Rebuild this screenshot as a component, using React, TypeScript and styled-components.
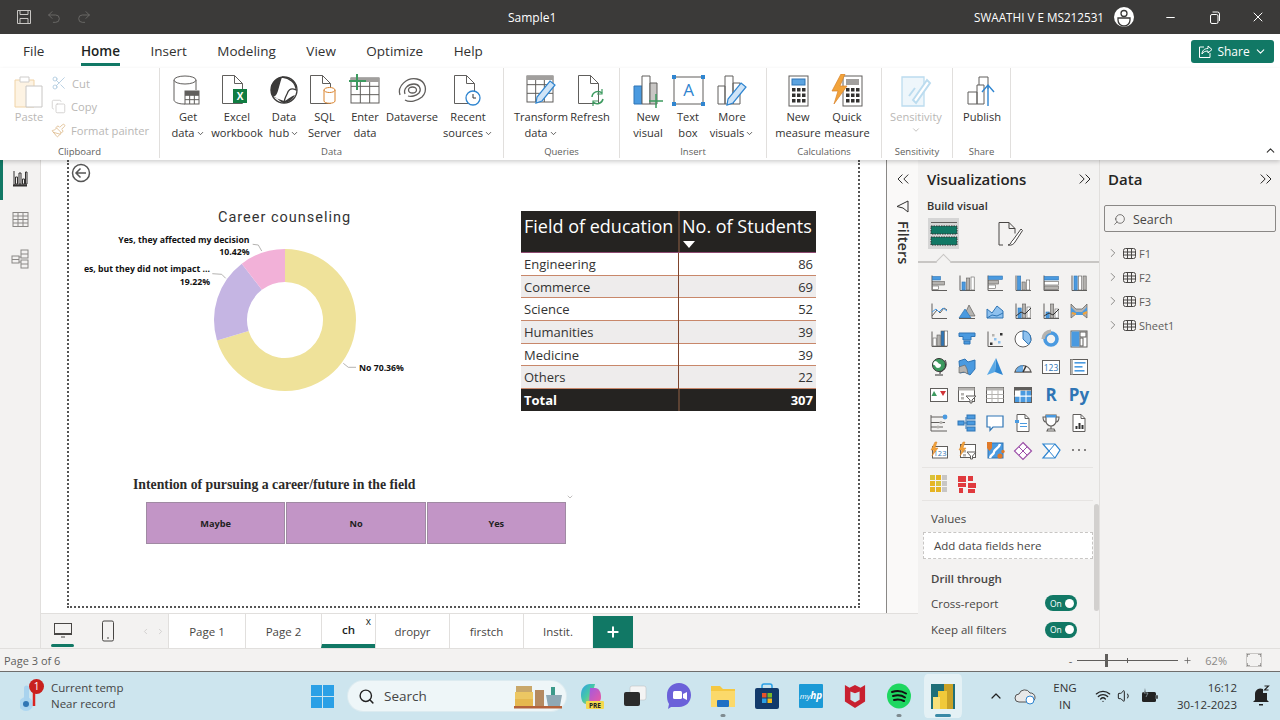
import React from 'react'
import styled, { createGlobalStyle } from 'styled-components'
import {
    ChevronDown, ChevronLeft, ChevronRight, ChevronUp, ChevronsLeft, ChevronsRight, Copy, Minus, Paintbrush, Plus,
    Scissors, Search, Undo2, Redo2, Wifi, Volume1, X,
} from 'lucide-react'

const UI = `"Open Sans", "Noto Sans", sans-serif`
const GREEN = '#117865'
const G = '#605e5c'
const B = '#4a9ae0'
const L = '#b5b3b0'

const GlobalStyle = createGlobalStyle`
    html, body { margin: 0; padding: 0; width: 1280px; height: 720px; overflow: hidden; }
    body { font-family: ${UI}; background: #fff; color: #252423; }
    * { box-sizing: border-box; }
    svg { display: block; flex: none; }
`

const Shell = styled.div`
    width: 1280px;
    height: 720px;
    display: flex;
    flex-direction: column;
    overflow: hidden;
`
const Spacer = styled.div<{ $w?: number; $h?: number }>`
    flex: none;
    width: ${p => p.$w ?? 0}px;
    height: ${p => p.$h ?? 0}px;
`

/* ---------- title bar ---------- */
const TitleBar = styled.div`
    height: 34px;
    flex: none;
    background: #3b3a39;
    color: #fff;
    display: flex;
    align-items: center;
    font-size: 12px;
`
const QuickTools = styled.div`
    width: 508px;
    padding-left: 16px;
    display: flex;
    align-items: center;
    gap: 14px;
`
const TitleRight = styled.div`
    margin-left: auto;
    display: flex;
    align-items: center;
`
const UserName = styled.span`
    font-size: 11.7px;
    margin-right: 9px;
`
const WinButton = styled.div`
    width: 44px;
    display: flex;
    justify-content: center;
`

/* ---------- menu ---------- */
const MenuRow = styled.div`
    height: 34px;
    flex: none;
    background: #fff;
    display: flex;
    align-items: center;
    gap: 30.5px;
    padding: 0 6px 0 23px;
`
const MenuTab = styled.div<{ $active?: boolean; $first?: boolean }>`
    position: relative;
    font-size: 13.5px;
    line-height: 20px;
    margin-right: ${p => (p.$first ? 6 : 0)}px;
    color: ${p => (p.$active ? '#201f1e' : '#323130')};
    font-weight: ${p => (p.$active ? 600 : 400)};
    &::after {
        content: '';
        display: ${p => (p.$active ? 'block' : 'none')};
        position: absolute;
        left: 0;
        right: 0;
        bottom: -5px;
        height: 3px;
        background: ${GREEN};
    }
`
const ShareButton = styled.div`
    margin-left: auto;
    width: 83px;
    height: 23px;
    margin-top: 1px;
    border-radius: 3px;
    background: ${GREEN};
    color: #fff;
    display: flex;
    align-items: center;
    justify-content: center;
    gap: 4px;
    font-size: 12px;
`

/* ---------- ribbon ---------- */
const Ribbon = styled.div`
    position: relative;
    z-index: 2;
    height: 92px;
    flex: none;
    background: #fff;
    display: flex;
    box-shadow: 0 2px 4px rgba(0, 0, 0, 0.18);
`
const Group = styled.div<{ $w: number; $pad?: number }>`
    width: ${p => p.$w}px;
    flex: none;
    display: flex;
    flex-direction: column;
    border-right: 1px solid #e1dfdd;
    margin-bottom: 2px;
    padding-left: ${p => p.$pad ?? 0}px;
`
const GroupBody = styled.div`
    flex: 1;
    display: flex;
    padding-top: 6px;
`
const GroupLabel = styled.div<{ $shift?: number }>`
    font-size: 9.5px;
    line-height: 12px;
    color: ${G};
    text-align: center;
    margin-left: ${p => -(p.$shift ?? 0)}px;
`
const RibbonBtn = styled.div<{ $w: number; $off?: boolean }>`
    width: ${p => p.$w}px;
    flex: none;
    display: flex;
    flex-direction: column;
    align-items: center;
    color: ${p => (p.$off ? '#b9b7b5' : '#323130')};
`
const IconSlot = styled.div`
    height: 35px;
    display: flex;
    align-items: flex-start;
    justify-content: center;
`
const BtnLine = styled.div`
    font-size: 11.1px;
    line-height: 16px;
    white-space: nowrap;
    display: flex;
    align-items: center;
    gap: 1px;
`
const SmallStack = styled.div`
    display: flex;
    flex-direction: column;
    gap: 5.5px;
    margin-left: 5px;
`
const SmallBtn = styled.div`
    height: 18px;
    display: flex;
    align-items: center;
    gap: 5px;
    font-size: 11.2px;
    color: #b9b7b5;
    white-space: nowrap;
`
const RibbonCollapse = styled.div`
    position: absolute;
    right: 3px;
    bottom: 3px;
    color: #323130;
`

/* ---------- main ---------- */
const Main = styled.div`
    flex: 1;
    min-height: 0;
    display: flex;
    background: #f3f2f1;
`
const LeftNav = styled.div`
    width: 41px;
    flex: none;
    display: flex;
    flex-direction: column;
    border-right: 1px solid #e1dfdd;
`
const NavItem = styled.div<{ $active?: boolean }>`
    height: 40px;
    display: flex;
    align-items: center;
    justify-content: center;
    padding: 0 3px 2px 0;
    border-left: 3px solid ${p => (p.$active ? GREEN : 'transparent')};
`
const Center = styled.div`
    width: 877px;
    flex: none;
    display: flex;
    flex-direction: column;
`
const CanvasRow = styled.div`
    flex: 1;
    min-height: 0;
    display: flex;
    background: #fff;
`
const Canvas = styled.div`
    width: 846px;
    flex: none;
    padding: 0 26px 5px 26px;
    border-right: 1px solid #8a8886;
`
const ReportPage = styled.div`
    position: relative;
    height: 100%;
    border: 2px dotted #555;
    border-top: none;
    display: flex;
    flex-direction: column;
`
const BackCircle = styled.div`
    margin: 3px 0 0 2px;
    height: 20px;
`
const TopVisuals = styled.div`
    display: flex;
    align-items: flex-start;
    margin-top: 28px;
`
const DonutVisual = styled.div`
    width: 336px;
    margin-left: 15px;
    flex: none;
`
const DonutTitle = styled.div`
    font-family: Roboto, sans-serif;
    font-size: 14.5px;
    line-height: 14px;
    letter-spacing: 1px;
    color: #333;
    padding-left: 134px;
    white-space: nowrap;
`
const ChartLabel = styled.text`
    font-family: ${UI};
    font-size: 8.7px;
    font-weight: 700;
    fill: #111;
`
const StudentsTable = styled.div`
    width: 295px;
    margin-left: 101px;
    flex: none;
    display: flex;
    flex-direction: column;
`
const HeadRow = styled.div`
    height: 42px;
    background: #252321;
    color: #fff;
    display: grid;
    grid-template-columns: 157px 1fr;
    border-bottom: 1px solid #8d4a70;
`
const HeadCell = styled.div`
    position: relative;
    font-size: 18px;
    line-height: 30px;
    padding-left: 3px;
    white-space: nowrap;
    & + & { border-left: 2px solid #5c4233; padding-left: 2px; }
`
const SortArrow = styled.div`
    position: absolute;
    left: 3px;
    bottom: 4px;
    border-left: 6px solid transparent;
    border-right: 6px solid transparent;
    border-top: 7px solid #fff;
`
const BodyRow = styled.div<{ $alt?: boolean }>`
    height: 22.7px;
    display: grid;
    grid-template-columns: 157px 1fr;
    background: ${p => (p.$alt ? '#eeecec' : '#fff')};
    border-bottom: 1.5px solid #c8876a;
    color: #333;
    font-size: 13px;
    line-height: 23px;
`
const BodyCell = styled.div<{ $right?: boolean }>`
    padding: 0 3px;
    text-align: ${p => (p.$right ? 'right' : 'left')};
    & + & { border-left: 1.5px solid #80442c; }
`
const TotalRow = styled.div`
    height: 22px;
    display: grid;
    grid-template-columns: 157px 1fr;
    background: #252321;
    color: #fff;
    font-size: 13px;
    font-weight: 700;
    line-height: 22px;
`
const TotalCell = styled.div<{ $right?: boolean }>`
    padding: 0 3px;
    text-align: ${p => (p.$right ? 'right' : 'left')};
    & + & { border-left: 2px solid #5c4233; }
`
const SlicerVisual = styled.div`
    position: relative;
    margin: 66px 0 0 64px;
    width: 441px;
`
const SlicerTitle = styled.div`
    font-family: "Liberation Serif", serif;
    font-weight: 700;
    font-size: 13.75px;
    line-height: 15px;
    color: #2b2a29;
    white-space: nowrap;
`
const SlicerCaret = styled.div`
    position: absolute;
    right: 0;
    top: 16px;
    color: #a19f9d;
`
const SlicerRow = styled.div`
    margin: 10px 0 0 13px;
    width: 420px;
    height: 42px;
    display: grid;
    grid-template-columns: repeat(3, 1fr);
    gap: 1px;
    background: #fff;
`
const SlicerItem = styled.div`
    background: #c295c6;
    border: 1px solid #a08aa3;
    display: flex;
    align-items: center;
    justify-content: center;
    font-size: 9.2px;
    font-weight: 700;
    color: #222;
`
const FiltersPane = styled.div`
    width: 31px;
    flex: none;
    display: flex;
    flex-direction: column;
    align-items: center;
    padding-top: 9px;
    color: #323130;
    background: #faf9f8;
`
const FiltersLabel = styled.div`
    writing-mode: vertical-rl;
    font-size: 14.5px;
    font-weight: 600;
    line-height: 16px;
    margin-top: 8px;
`
const TabsBar = styled.div`
    height: 35px;
    flex: none;
    display: flex;
    background: #f3f2f1;
    border-top: 1px solid #e1dfdd;
`
const ViewSwitch = styled.div`
    width: 127px;
    flex: none;
    display: flex;
    align-items: center;
    padding-left: 10px;
`
const ViewBtn = styled.div<{ $active?: boolean; $w: number }>`
    position: relative;
    width: ${p => p.$w}px;
    flex: none;
    display: flex;
    justify-content: center;
    &::after {
        content: '';
        display: ${p => (p.$active ? 'block' : 'none')};
        position: absolute;
        left: 0;
        right: 0;
        bottom: -7px;
        height: 3px;
        border-radius: 2px;
        background: ${GREEN};
    }
`
const PageArrows = styled.div`
    display: flex;
    gap: 6px;
    color: #c8c6c4;
`
const PageTab = styled.div<{ $w: number; $active?: boolean }>`
    position: relative;
    width: ${p => p.$w}px;
    flex: none;
    background: #fff;
    border-left: 1px solid #e1dfdd;
    display: flex;
    align-items: center;
    justify-content: center;
    font-size: 11.5px;
    font-weight: ${p => (p.$active ? 600 : 400)};
    color: ${p => (p.$active ? '#201f1e' : '#484644')};
    border-bottom: ${p => (p.$active ? `4px solid ${GREEN}` : '0')};
`
const TabClose = styled.span`
    position: absolute;
    top: 1px;
    right: 4px;
    font-size: 10px;
    line-height: 12px;
    font-weight: 400;
`
const AddPage = styled.div`
    width: 40px;
    height: 32px;
    margin: 2px 0 0 1px;
    background: ${GREEN};
    color: #fff;
    display: flex;
    align-items: center;
    justify-content: center;
`

/* ---------- right panes ---------- */
const VizPane = styled.div`
    position: relative;
    width: 181px;
    flex: none;
    display: flex;
    flex-direction: column;
    background: #f3f2f1;
    padding-top: 9px;
`
const PaneHead = styled.div<{ $left: number }>`
    display: flex;
    align-items: center;
    justify-content: space-between;
    padding: 0 4px 0 ${p => p.$left}px;
    font-size: 15px;
    font-weight: 600;
    line-height: 20px;
    color: #252423;
`
const BuildLabel = styled.div`
    font-size: 11px;
    font-weight: 600;
    line-height: 14px;
    margin: 10px 0 0 9px;
    color: #323130;
`
const BuildTabs = styled.div`
    display: flex;
    margin: 5px 0 0 10px;
    gap: 35px;
    height: 39px;
`
const BuildTab = styled.div<{ $active?: boolean }>`
    width: 31px;
    height: 31px;
    background: ${p => (p.$active ? '#d5d5d5' : 'transparent')};
    display: flex;
    align-items: center;
    justify-content: center;
`
const BuildRule = styled.div`
    position: relative;
    height: 2px;
    margin: 4px 0 0 0;
    background: #c8c6c4;
    &::after {
        content: '';
        position: absolute;
        left: 20px;
        top: -5px;
        width: 10px;
        height: 10px;
        transform: rotate(45deg);
        background: #f3f2f1;
        border-left: 1px solid #c8c6c4;
        border-top: 1px solid #c8c6c4;
    }
`
const VizGrid = styled.div<{ $top: number }>`
    display: grid;
    grid-template-columns: repeat(6, 28px);
    grid-auto-rows: 28px;
    padding: ${p => p.$top}px 0 0 7px;
`
const VizCell = styled.div`
    display: flex;
    align-items: center;
    justify-content: center;
`
const VizText = styled.span`
    font-size: 17px;
    font-weight: 700;
    line-height: 20px;
    color: #2f75b5;
`
const ThinRule = styled.div`
    height: 1px;
    background: #e6e4e2;
    margin: 2px 6px 0 4px;
`
const Scrollbar = styled.div`
    position: absolute;
    right: 0;
    top: 344px;
    width: 5px;
    height: 107px;
    border-radius: 3px;
    background: #d2d0ce;
`
const FieldLabel = styled.div`
    font-size: 11.5px;
    line-height: 16px;
    margin: 10px 0 0 13px;
    color: #484644;
`
const DropBox = styled.div`
    margin: 5px 6px 0 5px;
    height: 27px;
    background: #fff;
    border: 1px dashed #c8c6c4;
    display: flex;
    align-items: center;
    padding-left: 10px;
    font-size: 11.5px;
    color: #484644;
`
const DrillTitle = styled.div`
    font-size: 11.5px;
    font-weight: 600;
    line-height: 16px;
    margin: 12px 0 3px 13px;
    color: #484644;
`
const ToggleRow = styled.div`
    height: 26.5px;
    display: flex;
    align-items: center;
    justify-content: space-between;
    padding: 0 22px 0 13px;
    font-size: 11.5px;
    color: #484644;
`
const Toggle = styled.div`
    width: 32px;
    height: 16px;
    border-radius: 8px;
    background: ${GREEN};
    color: #fff;
    font-size: 8.5px;
    display: flex;
    align-items: center;
    justify-content: space-between;
    padding: 0 3px 0 5px;
    &::after {
        content: '';
        width: 9px;
        height: 9px;
        border-radius: 50%;
        background: #fff;
    }
`
const DataPane = styled.div`
    flex: 1;
    display: flex;
    flex-direction: column;
    background: #f3f2f1;
    border-left: 1px solid #e1dfdd;
    padding-top: 9px;
`
const SearchBox = styled.div`
    margin: 16px 4px 0 4px;
    height: 27px;
    border: 1px solid #8a8886;
    border-radius: 2px;
    display: flex;
    align-items: center;
    gap: 7px;
    padding: 1px 0 0 8px;
    font-size: 12.5px;
    color: #484644;
`
const MirroredSearch = styled(Search)`
    transform: scaleX(-1);
`
const TreeList = styled.div`
    margin-top: 9px;
    padding-left: 6px;
`
const TreeRow = styled.div`
    height: 24px;
    display: flex;
    align-items: center;
    gap: 3px;
    font-size: 11px;
    color: #605e5c;
`

/* ---------- status bar ---------- */
const StatusBar = styled.div`
    height: 24px;
    flex: none;
    background: #f3f2f1;
    border-top: 1px solid #e1dfdd;
    border-bottom: 1px solid #6f6e6c;
    display: flex;
    align-items: center;
    padding: 0 18px 0 4px;
    font-size: 11px;
    color: #605e5c;
`
const ZoomTools = styled.div`
    margin-left: auto;
    display: flex;
    align-items: center;
    gap: 5px;
`
const ZoomTrack = styled.div`
    position: relative;
    width: 101px;
    height: 1px;
    background: #605e5c;
    &::before {
        content: '';
        position: absolute;
        left: 28px;
        top: -6px;
        width: 3px;
        height: 13px;
        background: #605e5c;
    }
    &::after {
        content: '';
        position: absolute;
        left: 50px;
        top: -2px;
        width: 1px;
        height: 5px;
        background: #605e5c;
    }
`
const ZoomValue = styled.span`
    margin: 0 14px 0 8px;
    color: #8a8886;
`

/* ---------- taskbar ---------- */
const Taskbar = styled.div`
    height: 48px;
    flex: none;
    background: #cde5ee;
    display: flex;
    align-items: center;
`
const Weather = styled.div`
    width: 311px;
    flex: none;
    padding-left: 20px;
    display: flex;
    align-items: center;
    gap: 1px;
    font-size: 11.5px;
    line-height: 16px;
    color: #444;
`
const Badge = styled.div`
    position: absolute;
    left: 9px;
    top: -1px;
    width: 15px;
    height: 15px;
    border-radius: 50%;
    background: #c8201e;
    color: #fff;
    font-size: 10px;
    line-height: 15px;
    text-align: center;
`
const ThermoWrap = styled.div`
    position: relative;
    width: 30px;
    height: 32px;
`
const TaskSearch = styled.div`
    width: 218px;
    height: 30px;
    margin-left: 14px;
    border-radius: 15px;
    background: #eef6f8;
    display: flex;
    align-items: center;
    padding: 0 2px 0 10px;
    gap: 9px;
    font-size: 13.5px;
    color: #444;
    box-shadow: 0 0 0 1px #dcebf0;
`
const TaskSearchText = styled.span`
    flex: 1;
`
const TaskIcons = styled.div`
    display: flex;
    align-items: center;
    margin-left: 3px;
`
const TaskIcon = styled.div<{ $active?: boolean; $dot?: boolean }>`
    position: relative;
    width: 44px;
    height: 44px;
    display: flex;
    align-items: center;
    justify-content: center;
    border-radius: 6px;
    border: 0 solid transparent;
    border-width: 0 3px;
    background: ${p => (p.$active ? '#e4f1f5' : 'transparent')};
    background-clip: padding-box;
    &::after {
        content: '';
        display: ${p => (p.$active || p.$dot ? 'block' : 'none')};
        position: absolute;
        bottom: 1px;
        left: 50%;
        transform: translateX(-50%);
        width: ${p => (p.$active ? 16 : 5)}px;
        height: 3px;
        border-radius: 2px;
        background: ${p => (p.$active ? '#3a8aa6' : '#7f8b90')};
    }
`
const Tray = styled.div`
    margin-left: 23px;
    display: flex;
    align-items: center;
    color: #222;
`
const LangBlock = styled.div`
    width: 34px;
    margin: 0 13px 0 12px;
    font-size: 11.5px;
    line-height: 17px;
    text-align: center;
    color: #333;
`
const ClockBlock = styled.div`
    margin-left: 18px;
    font-size: 11.5px;
    line-height: 17px;
    text-align: right;
    color: #333;
`

/* ---------- drawn icons ---------- */
const Rect = (x: number, y: number, w: number, h: number, fill = 'none', stroke?: string) => (
    <rect x={x} y={y} width={w} height={h} fill={fill} stroke={stroke} />
)
const Axes = () => <path d="M3 2.5v15h15" fill="none" stroke={G} />

const Bars = (rows: [number, number, string][]) => (
    <>
        <Axes />
        {rows.map(([y, w, c], i) => <rect key={i} x={3.5} y={y} width={w} height={3.5} fill={c} stroke={c === B ? '#2f75b5' : G} strokeWidth={0.6} />)}
    </>
)
const Cols = (cols: [number, number, string][]) => (
    <>
        <Axes />
        {cols.map(([x, h, c], i) => <rect key={i} x={x} y={17 - h} width={3.2} height={h} fill={c} stroke={c === B ? '#2f75b5' : G} strokeWidth={0.6} />)}
    </>
)
const PBolt = () => <path d="M6 1 2 9h3l-2 6 6-8H6l2-6z" fill="#f2a33a" stroke="#d9822b" strokeWidth={0.5} />

const VIZ_ICONS: React.ReactNode[] = [
    Bars([[3.5, 8, B], [8.5, 12, L], [13, 6, '#fff']]),
    Cols([[5, 8, B], [9.5, 12, L], [14, 13, '#fff']]),
    Bars([[3, 14, B], [7.5, 10, L], [12, 7, '#fff']]),
    Cols([[4.5, 14, B], [9, 8, L], [13.5, 10, '#fff']]),
    Bars([[3.5, 14, B], [8.5, 14, '#fff'], [13, 14, L]]),
    Cols([[5, 14, B], [9.5, 14, '#fff'], [14, 14, L]]),
    <><Axes /><path d="M3 15l5-6 3 3 4-5 3 2" fill="none" stroke={G} /><path d="M3 11l4-3 3 3 4-4 4 3" fill="none" stroke={B} /></>,
    <><path d="M7 15 12 4l6 11z" fill={L} stroke={G} strokeWidth={0.7} /><path d="M2 17l6-9 6 9z" fill={B} stroke="#2f75b5" strokeWidth={0.7} /><path d="M2 17.5h16" stroke={G} /></>,
    <><path d="M2 17V8l5 4 5-7 6 5v7z" fill="#8ec1ee" stroke="#2f75b5" /><path d="M2 17l5-3 5 1 6-3" fill="none" stroke="#2f75b5" /></>,
    <>{Cols([[5, 10, B], [9.5, 14, L], [14, 11, '#fff']])}<path d="M3 15l5-4 4 2 6-6" fill="none" stroke="#333" /></>,
    <>{Cols([[5, 6, B], [9.5, 14, L], [14, 9, '#fff']])}<path d="M3 15l5-3 4 2 6-6" fill="none" stroke="#333" /></>,
    <><path d="M2 3l5 5 6 0 5-5v14l-5-4H7l-5 4z" fill={L} stroke={G} strokeWidth={0.7} /><path d="M2 6l5 5h6l5-5v5l-5 3H7l-5-3z" fill={B} /><path d="M3 12l4 1m7 0 4-2" stroke="#f2a33a" strokeWidth={2} /></>,
    <>{Cols([[4, 8, '#fff'], [8, 11, L], [12, 15, '#2f75b5'], [15.5, 15, '#fff']])}</>,
    <><path d="M2 4h16v3.5H14V11H6V7.5H2z" fill={B} stroke="#2f75b5" /><path d="M7 12h6v3H7z" fill={B} stroke="#2f75b5" /></>,
    <><Axes />{Rect(5, 13.5, 2.5, 2.5, '#333')}{Rect(7, 5, 2.5, 2.5, L)}{Rect(9, 9, 2.5, 2.5, '#8ec1ee')}{Rect(13, 12, 2.5, 2.5, '#8ec1ee')}{Rect(15, 4, 2.5, 2.5, '#333')}</>,
    <><circle cx="10" cy="10" r="8" fill="#fff" stroke={G} /><path d="M10 2a8 8 0 0 1 5.7 13.6L10 10z" fill="#8ec1ee" stroke="#2f75b5" /></>,
    <><circle cx="10" cy="10" r="6" fill="none" stroke={B} strokeWidth={3.6} /><path d="M10 2.2A7.8 7.8 0 0 0 2.2 10" fill="none" stroke={L} strokeWidth={3.6} /></>,
    <>{Rect(2, 2, 16, 16, '#fff', G)}{Rect(2.5, 2.5, 8, 15, B)}{Rect(11, 3, 6, 5, '#fff', G)}{Rect(11, 9, 3, 8, '#fff', G)}</>,
    <><circle cx="10" cy="8" r="6.5" fill="#3c9a5f" stroke="#333" /><path d="M6 4c3 0 3 3 5 3s1 4-2 4-2-3-4-3 0-4 1-4z" fill="#fff" /><path d="M16 3a8 8 0 0 1-5 12v2M6 18h8" fill="none" stroke="#333" /></>,
    <><path d="M2 4l6-2 3 3 7-2v9l-5 6-5-3-5 1z" fill={B} stroke="#2f75b5" /><path d="M2 10l6-2 2 4 1 5-4-2-5 1z" fill={L} stroke={G} strokeWidth={0.6} /></>,
    <><path d="M11 1 18 18l-8-3z" fill="#2e86d1" /><path d="M11 1 2 18l8-3z" fill="#5aa9e6" /></>,
    <><path d="M2 15a8.2 8.2 0 0 1 16 0z" fill="none" stroke={G} strokeWidth={1.3} /><path d="M3 15a7 7 0 0 1 7-7v7z" fill={B} opacity={0.8} /><path d="M10 15l3-6" stroke="#333" strokeWidth={1.6} /></>,
    <>{Rect(1.5, 3.5, 17, 13, '#fff', G)}<text x="10" y="13.5" textAnchor="middle" fontSize="8.5" fill="#2f75b5" fontFamily="Open Sans">123</text></>,
    <>{Rect(1.5, 2.5, 17, 15, '#fff', G)}{Rect(1.5, 2.5, 2.5, 15, L)}{Rect(5.5, 5, 11, 1.6, B)}{Rect(5.5, 9, 8, 1.6, B)}{Rect(5.5, 13, 10, 1.6, B)}</>,
    <>{Rect(1.5, 3.5, 17, 13, '#fff', G)}<path d="M5 6l3 5H2.5z" fill="#3c9a5f" /><path d="M11 6h6l-3 5z" fill="#d13438" /></>,
    <>{Rect(1.5, 2.5, 16, 14, '#fff', G)}{Rect(1.5, 2.5, 16, 3, L)}{Rect(4, 8, 3, 2.5, L)}{Rect(4, 12, 3, 2.5, L)}<path d="M9 11h10l-4 4v3h-2v-3z" fill="#fff" stroke={G} /></>,
    <>{Rect(1.5, 2.5, 17, 15, '#fff', G)}{Rect(1.5, 2.5, 17, 3, L)}<path d="M7 5.5v12m6-12v12M1.5 9.5h17M1.5 13.5h17" stroke={L} /></>,
    <>{Rect(1.5, 2.5, 17, 15, '#fff', G)}{Rect(1.5, 2.5, 17, 3, G)}{Rect(7, 6, 11, 5, B)}{Rect(2, 11.5, 16, 5.5, B)}<path d="M7 5.5v12m6-12v12M1.5 11h17" stroke="#fff" /></>,
    'R',
    'Py',
    <><path d="M2 2v16M2 4h14M2 9.5h14M2 14h12M2 18h16" fill="none" stroke={G} /><circle cx="16" cy="4" r="2.4" fill={B} /><circle cx="12" cy="9.5" r="1.6" fill={L} /><circle cx="9" cy="14" r="1.6" fill={L} /></>,
    <>{Rect(1, 8, 6, 4, B, '#2f75b5')}{Rect(10, 2, 8, 4, B, '#2f75b5')}{Rect(10, 8, 8, 4, B, '#2f75b5')}{Rect(10, 14, 8, 4, B, '#2f75b5')}<path d="M7 10h3M9 4v12" stroke="#2f75b5" fill="none" /></>,
    <path d="M2 3h16v11H8l-3 3.5V14H2z" fill="#fff" stroke="#2f75b5" strokeWidth={1.2} />,
    <><path d="M4 1.5h8l4 4v13H4z" fill="#fff" stroke={G} /><path d="M12 1.5v4h4" fill="none" stroke={G} />{Rect(2, 7, 4, 3, B)}<path d="M7 10.5h7M7 13.5h7" stroke={B} /></>,
    <><path d="M5 2h10v6a5 5 0 0 1-10 0z" fill="#fff" stroke={G} strokeWidth={1.2} />{Rect(5, 2, 10, 2.5, B)}<path d="M5 4H2c0 3 1 5 3 5m10-5h3c0 3-1 5-3 5M10 13v3M6 18h8l-1-2H7z" fill="none" stroke={G} strokeWidth={1.1} /></>,
    <><path d="M4 1.5h8l4 4v13H4z" fill="#fff" stroke={G} /><path d="M12 1.5v4h4" fill="none" stroke={G} /><path d="M6.5 16v-3h2v3zm3 0v-6h2v6zm3 0v-4h2v4z" fill="#333" /></>,
    <>{Rect(3.5, 5.5, 15, 11.5, '#fff', G)}<text x="11" y="14.5" textAnchor="middle" fontSize="7.5" fill="#2f75b5" fontFamily="Open Sans">123</text><PBolt /></>,
    <>{Rect(3.5, 3.5, 15, 13, '#fff', G)}{Rect(6, 9, 3, 2.5, L)}{Rect(6, 13, 3, 2.5, L)}<path d="M10 11h9l-3.5 4v3h-2v-3z" fill="#fff" stroke={G} /><PBolt /></>,
    <>{Rect(3, 2, 15, 15, '#4a9ae0', '#2f75b5')}<path d="M5 17c1-4 4-3 4-6s5-3 6-8" stroke="#fff" strokeWidth={2.4} fill="none" /><path d="M2 1h5v6L4.5 10 2 7z" fill="#e07a2a" /><circle cx="15" cy="15" r="2.6" fill="#e07a2a" /><circle cx="18" cy="10.5" r="1.7" fill="#e07a2a" /></>,
    <><path d="M10 1.5 18.5 10 10 18.5 1.5 10z" fill="#fff" stroke="#9c4fa8" strokeWidth={1.2} /><path d="M6 6l8 8M14 6l-8 8" stroke="#9c4fa8" strokeWidth={1} /></>,
    <><path d="M2 3h12l5 6-5 8H2l6-7z" fill="#fff" stroke="#2f85d0" strokeWidth={1.2} /><path d="M8 10l6-7M8 10l6 7" stroke="#2f85d0" /></>,
    <><circle cx="4" cy="9" r="1" fill={G} /><circle cx="10" cy="9" r="1" fill={G} /><circle cx="16" cy="9" r="1" fill={G} /></>,
]

const GridTiles = () => (
    <svg width="20" height="20" viewBox="0 0 20 20">
        {[[1, 1, '#d9c23a'], [7, 1, '#e6b422'], [13, 1, '#c8c6c4'], [1, 7, '#e6b422'], [7, 7, '#d9c23a'], [13, 7, '#c8c6c4'], [1, 13, '#e6b422'], [7, 13, '#e6b422'], [13, 13, '#c8c6c4']].map(([x, y, c], i) => (
            <rect key={i} x={x as number} y={y as number} width="5" height="5" fill={c as string} />
        ))}
    </svg>
)
const RedBlocks = () => (
    <svg width="20" height="20" viewBox="0 0 20 20">
        <path d="M1 2h8v6H1zM11 2h5v5h-5zM1 9h8v4H1zM11 9h8v5h-8zM2 14h4v5H2zM11 15h7v4h-7z" fill="#e03a3e" />
    </svg>
)

const Doc = ({ children, x = 3, w = 20 }: { children?: React.ReactNode; x?: number; w?: number }) => (
    <svg width="34" height="34" viewBox="0 0 34 34">
        <path d={`M${x + 0.5} 1.5h${w - 8}l8 8v${20}h-${w}z`} fill="#fff" stroke={G} />
        <path d={`M${x + w - 7.5} 1.5v8h8`} fill="none" stroke={G} />
        {children}
    </svg>
)
const TableGrid = ({ x, y, w, h }: { x: number; y: number; w: number; h: number }) => (
    <g stroke={G} fill="#fff">
        <rect x={x} y={y} width={w} height={h} />
        <path d={`M${x + w / 3} ${y}v${h}M${x + 2 * w / 3} ${y}v${h}M${x} ${y + h / 3}h${w}M${x} ${y + 2 * h / 3}h${w}`} fill="none" />
    </g>
)
const Pencil = ({ dx = 0, dy = 0 }: { dx?: number; dy?: number }) => (
    <path transform={`translate(${dx} ${dy})`} d="M25 7l5 4-13 16-6 2 1-6z" fill="#cfe4f7" stroke="#2f85d0" strokeWidth={1.2} />
)
const IconPaste = () => (
    <svg width="34" height="36" viewBox="0 0 34 36">
        <path d="M3 6h19v27H3z" fill="#fdf3e3" stroke="#f0d3a6" />
        <path d="M8 3h9v5H8z" fill="#fff" stroke="#cfcdcb" />
        <path d="M14 12h16v21H14z" fill="#fff" stroke="#c8c6c4" />
    </svg>
)
const IconGetData = () => (
    <svg width="34" height="34" viewBox="0 0 34 34">
        <path d="M3 6v20c0 2 4 4 10 4h1M25 6v10" fill="none" stroke={G} />
        <ellipse cx="14" cy="6" rx="11" ry="4" fill="#fff" stroke={G} />
        <TableGrid x={14} y={17} w={14} h={13} />
        <rect x="14" y="17" width="14" height="4" fill={G} />
    </svg>
)
const IconExcel = () => (
    <Doc x={2} w={20}>
        <rect x="13" y="15" width="14" height="14" fill="#107c41" />
        <text x="20" y="26" textAnchor="middle" fontSize="10" fontWeight="700" fill="#fff" fontFamily="Open Sans">X</text>
    </Doc>
)
const IconHub = () => (
    <svg width="34" height="34" viewBox="0 0 34 34">
        <circle cx="17" cy="16" r="13" fill="#fff" stroke="#3b3a39" strokeWidth={1.3} />
        <path d="M15 3A13 13 0 0 0 6 23c5-1 5-8 9-20z" fill="#3b3a39" />
        <path d="M15 3c7 1 14 5 14 13-6-3-8 1-9 4-2 4-3 8-3 9" fill="none" stroke="#3b3a39" strokeWidth={1.3} />
        <path d="M6 23c5 0 6 5 11 6 5 0 9-4 11-8-7 3-9 6-11 6" fill="#3b3a39" />
    </svg>
)
const IconSql = () => (
    <Doc x={2} w={20}>
        <path d="M16 16v11c0 3 11 3 11 0V16" fill="#fff" stroke="#d9822b" />
        <ellipse cx="21.5" cy="16" rx="5.5" ry="2.5" fill="#fff" stroke="#d9822b" />
    </Doc>
)
const IconEnter = () => (
    <svg width="34" height="34" viewBox="0 0 34 34">
        <TableGrid x={3} y={4} w={28} h={25} />
        <rect x="3" y="4" width="28" height="4" fill="#a19f9d" />
        <path d="M9 0v16M1 7h17" stroke="#3c9a5f" strokeWidth={2} />
    </svg>
)
const IconDataverse = () => (
    <svg width="34" height="34" viewBox="0 0 34 34" fill="none" stroke={G} strokeWidth={1.3}>
        <path d="M5 21C2 12 12 3 22 5c9 2 11 12 5 18-5 4-12 6-17 3" />
        <path d="M10 20c-2-5 3-10 9-10 5 0 8 5 5 9-3 3-8 4-11 3" />
        <ellipse cx="17.5" cy="16" rx="4" ry="3" />
    </svg>
)
const IconRecent = () => (
    <Doc x={3} w={20}>
        <circle cx="22" cy="24" r="7" fill="#fff" stroke="#2f85d0" strokeWidth={1.3} />
        <path d="M22 20v4h3" fill="none" stroke="#323130" />
    </Doc>
)
const IconTransform = () => (
    <svg width="34" height="34" viewBox="0 0 34 34">
        <TableGrid x={3} y={2} w={26} h={26} />
        <rect x="3" y="2" width="26" height="4" fill="#a19f9d" />
        <Pencil dx={1} dy={0} />
    </svg>
)
const IconRefresh = () => (
    <Doc x={5} w={20}>
        <path d="M19 23a6 6 0 0 1 10-4m1 6a6 6 0 0 1-10 3" fill="none" stroke="#3c9a5f" strokeWidth={1.5} />
        <path d="M29 15v5h-5M20 32v-5h5" fill="none" stroke="#3c9a5f" strokeWidth={1.2} />
    </Doc>
)
const IconNewVisual = () => (
    <svg width="34" height="34" viewBox="0 0 34 34">
        <path d="M3 12h8v18H3z" fill="#4a9ae0" stroke="#2f75b5" />
        <path d="M11 2h8v28h-8z" fill="#fff" stroke={G} />
        <path d="M19 9h7v21h-7z" fill="#c8c6c4" stroke={G} />
        <path d="M25 20v14M18 27h14" stroke="#3c9a5f" strokeWidth={1.5} />
    </svg>
)
const IconTextBox = () => (
    <svg width="34" height="34" viewBox="0 0 34 34">
        <rect x="3" y="3" width="29" height="27" fill="#fff" stroke={G} />
        <text x="17.5" y="22" textAnchor="middle" fontSize="17" fill="#2f85d0" fontFamily="Open Sans">A</text>
        {[[3, 3], [32, 3], [3, 30], [32, 30]].map(([x, y], i) => <rect key={i} x={x - 2} y={y - 2} width="4" height="4" fill="#2f85d0" />)}
    </svg>
)
const IconMore = () => (
    <svg width="34" height="34" viewBox="0 0 34 34">
        <path d="M3 12h7v18H3zM10 2h8v28h-8zM18 9h7v21h-7z" fill="#fff" stroke={G} />
        <Pencil dx={1} dy={2} />
    </svg>
)
const IconCalc = ({ bolt }: { bolt?: boolean }) => (
    <svg width="34" height="34" viewBox="0 0 34 34">
        <rect x={bolt ? 13 : 8} y="2" width="19" height="30" fill="#fff" stroke={G} />
        <rect x={bolt ? 16 : 11} y="5" width="13" height="6" fill={bolt ? '#a19f9d' : '#5ba3e0'} stroke={bolt ? 'none' : '#2f75b5'} />
        {[0, 1, 2].flatMap(r => [0, 1, 2].map(c => (
            <rect key={`${r}${c}`} x={(bolt ? 16 : 11) + c * 5} y={14 + r * 5.5} width="3.5" height="3.5" fill="#323130" />
        )))}
        {bolt && <path d="M11 0 2 17h6l-4 13 13-18h-7l5-12z" fill="#f2a33a" stroke="#d9822b" strokeWidth={0.7} />}
    </svg>
)
const IconSensitivity = () => (
    <svg width="34" height="34" viewBox="0 0 34 34">
        <path d="M3 3h22v29H3z" fill="#eef6fb" stroke="#bcdcef" strokeWidth={1.3} />
        <path d="M14 26 28 6l3 3-14 20zM10 22l6-8" fill="#fff" stroke="#bcdcef" strokeWidth={2} />
    </svg>
)
const IconPublish = () => (
    <svg width="34" height="34" viewBox="0 0 34 34">
        <path d="M3 18h9v12H3zM12 11h7v19h-7zM14 11V3h9v12" fill="#fff" stroke={G} />
        <path d="M23 32V11m-6 7 6-7 6 7" fill="none" stroke="#2f85d0" strokeWidth={1.4} />
    </svg>
)
const BuildIcon = () => (
    <svg width="28" height="26" viewBox="0 0 28 26">
        <path d="M1 1.5h26" stroke="#605e5c" />
        <rect x="1" y="5" width="26" height="8" fill={GREEN} stroke="#333" strokeDasharray="1.5 1" />
        <rect x="1" y="16" width="26" height="8" fill={GREEN} stroke="#333" strokeDasharray="1.5 1" />
    </svg>
)
const FormatIcon = () => (
    <svg width="26" height="26" viewBox="0 0 26 26" fill="none" stroke="#484644">
        <path d="M6 24H2V1.5h10l6 6v5" />
        <path d="M12 1.5v6h6" />
        <path d="M11 24c3 0 3-4 5-5L24 8l1.5 1.5L18 21c-1 2-4 4-7 3z" fill="#fff" />
    </svg>
)
const TableIcon = () => (
    <svg width="13" height="13" viewBox="0 0 13 13" fill="none" stroke="#484644">
        <rect x="0.5" y="1.5" width="12" height="10" rx="2" />
        <path d="M4.5 1.5v10M8.5 1.5v10M0.5 5h12M0.5 8h12" />
    </svg>
)
const FunnelIcon = () => (
    <svg width="13" height="13" viewBox="0 0 13 13" fill="none" stroke="#323130">
        <path d="M12 1v11L7 8 1 6.5z" />
    </svg>
)
const ShareIcon = () => (
    <svg width="15" height="15" viewBox="0 0 15 15" fill="none" stroke="#fff">
        <path d="M6 3H1.5v10.5H12V9" />
        <path d="M4 10c0-3 2-5.5 6-5.5V2l4 3.5L10 9V7C7 7 5 8 4 10z" />
    </svg>
)
const SaveIcon = () => (
    <svg width="16" height="16" viewBox="0 0 16 16" fill="none" stroke="#c8c6c4">
        <path d="M1.5 1.5h13v13h-13z" />
        <path d="M4 1.5v4h8v-4M4 14.5V9.5h8v5" />
    </svg>
)
const Avatar = () => (
    <svg width="22" height="22" viewBox="0 0 22 22">
        <circle cx="11" cy="11" r="10" fill="#fff" />
        <circle cx="11" cy="7.5" r="3" fill="none" stroke="#3b3a39" strokeWidth={1.3} />
        <path d="M5 12h12v2a5 5 0 0 1-12 0z" fill="none" stroke="#3b3a39" strokeWidth={1.3} />
    </svg>
)
const RestoreIcon = () => (
    <svg width="13" height="13" viewBox="0 0 13 13" fill="none" stroke="#fff">
        <rect x="2.5" y="3.5" width="7.5" height="9" rx="1.5" />
        <path d="M4.5 1h5a2 2 0 0 1 2 2v7" />
    </svg>
)
const ReportViewIcon = () => (
    <svg width="16" height="18" viewBox="0 0 16 18">
        <path d="M2 1v14h13" fill="none" stroke="#323130" />
        <path d="M3.5 7h2v7h-2zM7 3h2v11H7zM10.5 9h2v5h-2zM13.5 2h1.5v12h-1.5z" fill="none" stroke="#323130" />
        <path d="M1 15.5h14" stroke="#323130" strokeWidth={2} />
    </svg>
)
const TableViewIcon = () => (
    <svg width="17" height="17" viewBox="0 0 17 17" fill="none" stroke="#8a8886">
        <rect x="1" y="1.5" width="15" height="14" fill="#f3f2f1" />
        <path d="M1 5h15M1 8.5h15M1 12h15M6 1.5v14M11 1.5v14" />
    </svg>
)
const ModelViewIcon = () => (
    <svg width="18" height="20" viewBox="0 0 18 20" fill="none" stroke="#8a8886">
        <rect x="1" y="7" width="7" height="7" />
        <rect x="10" y="1" width="7" height="8" />
        <rect x="10" y="11" width="7" height="8" />
        <path d="M1 10.5h7M10 5h7M10 15h7M8 8h2M8 13h2" />
    </svg>
)
const BackIcon = () => (
    <svg width="20" height="20" viewBox="0 0 20 20" fill="none" stroke="#555" strokeWidth={1.5}>
        <circle cx="10" cy="10" r="8.5" />
        <path d="M15 10H5m4.5-4.5L5 10l4.500 4.500" />
    </svg>
)
const DesktopIcon = () => (
    <svg width="20" height="18" viewBox="0 0 20 18" fill="none" stroke="#484644">
        <rect x="1.5" y="1.5" width="17" height="11" />
        <path d="M1.5 11.5h17M8 15h4" />
    </svg>
)
const PhoneIcon = () => (
    <svg width="14" height="22" viewBox="0 0 14 22" fill="none" stroke="#484644">
        <rect x="1.5" y="1" width="11" height="20" rx="1.5" />
        <path d="M6 18h2" />
    </svg>
)
const FitIcon = () => (
    <svg width="16" height="14" viewBox="0 0 16 14" fill="none" stroke="#605e5c">
        <path d="M1 4V1h3M12 1h3v3M15 10v3h-3M4 13H1v-3" />
        <rect x="0.5" y="0.5" width="15" height="13" stroke="#c8c6c4" />
    </svg>
)

/* ---------- donut ---------- */
const SLICES = [
    { value: 70.36, color: '#efe29a' },
    { value: 19.22, color: '#c5b5e3' },
    { value: 10.42, color: '#f2b1d8' },
]
const polar = (r: number, a: number, cx: number, cy: number) => [cx + r * Math.sin(a), cy - r * Math.cos(a)]
const arcPath = (from: number, to: number, cx: number, cy: number, R: number, r: number) => {
    const a0 = (from / 100) * Math.PI * 2
    const a1 = (to / 100) * Math.PI * 2
    const large = to - from > 50 ? 1 : 0
    const [x0, y0] = polar(R, a0, cx, cy)
    const [x1, y1] = polar(R, a1, cx, cy)
    const [x2, y2] = polar(r, a1, cx, cy)
    const [x3, y3] = polar(r, a0, cx, cy)
    return `M${x0} ${y0}A${R} ${R} 0 ${large} 1 ${x1} ${y1}L${x2} ${y2}A${r} ${r} 0 ${large} 0 ${x3} ${y3}Z`
}
const DonutChart = () => {
    let acc = 0
    return (
        <svg width="336" height="170" viewBox="84 225 336 170">
            {SLICES.map(s => {
                const d = arcPath(acc, acc + s.value, 285, 320, 71, 38)
                acc += s.value
                return <path key={s.color} d={d} fill={s.color} />
            })}
            <g fill="none" stroke="#a19f9d" strokeWidth={0.8}>
                <path d="M252.7 244.3 258.3 245 261.7 251" />
                <path d="M212.3 273.7 221.7 274.3 225.7 278.3" />
                <path d="M343.3 363.3 348.3 367.3 356 367.3" />
            </g>
            <ChartLabel x="249.5" y="243" textAnchor="end">Yes, they affected my decision</ChartLabel>
            <ChartLabel x="249.5" y="255" textAnchor="end">10.42%</ChartLabel>
            <ChartLabel x="210" y="272" textAnchor="end">Yes, but they did not impact ...</ChartLabel>
            <ChartLabel x="210" y="284.5" textAnchor="end">19.22%</ChartLabel>
            <ChartLabel x="359" y="371">No 70.36%</ChartLabel>
        </svg>
    )
}

/* ---------- taskbar icons ---------- */
const Thermo = () => (
    <svg width="24" height="32" viewBox="0 0 24 32">
        <circle cx="6" cy="24" r="7" fill="#9fd0f2" opacity={0.7} />
        <path d="M4 8a2.5 2.5 0 0 1 5 0v13a4 4 0 1 1-5 0z" fill="#a9d3ee" />
        <circle cx="6" cy="24" r="3" fill="#2f75b5" />
        <path d="M14 8v18" stroke="#d9221f" strokeWidth={2.5} />
    </svg>
)
const WinLogo = () => (
    <svg width="23" height="23" viewBox="0 0 23 23">
        <path d="M0 0h11v11H0zM12 0h11v11H12zM0 12h11v11H0zM12 12h11v11H12z" fill="#2aa0e6" />
    </svg>
)
const SearchArt = () => (
    <svg width="50" height="28" viewBox="0 0 50 28">
        <rect x="2" y="4" width="16" height="6" fill="#c9a86a" />
        <rect x="1" y="10" width="18" height="7" fill="#ecc763" />
        <rect x="1" y="17" width="18" height="7" fill="#e5b84f" />
        <rect x="21" y="8" width="9" height="16" fill="#b58a60" />
        <path d="M32 13h16l-2 11H34z" fill="#8fa9b5" />
        <rect x="37" y="5" width="4" height="8" fill="#3c9a8a" />
        <rect x="0" y="24" width="48" height="2.5" fill="#b4623a" />
    </svg>
)
const Copilot = () => (
    <svg width="26" height="28" viewBox="0 0 26 28">
        <defs>
            <linearGradient id="copA" x1="0" y1="0" x2="1" y2="1">
                <stop offset="0" stopColor="#2f9fe8" />
                <stop offset="0.5" stopColor="#46c9a6" />
                <stop offset="1" stopColor="#f2c23a" />
            </linearGradient>
            <linearGradient id="copB" x1="0" y1="0" x2="1" y2="1">
                <stop offset="0" stopColor="#a05ae0" />
                <stop offset="1" stopColor="#ee5aa0" />
            </linearGradient>
        </defs>
        <path d="M3 13C3 6 7 2 12 2h5l-5 20H8c-3 0-5-4-5-9z" fill="url(#copA)" />
        <path d="M12 6h5c4 0 6 4 6 9s-3 6-6 6h-6z" fill="url(#copB)" />
        <rect x="8" y="19" width="18" height="8" rx="1" fill="#f3d94e" />
        <text x="17" y="25.8" textAnchor="middle" fontSize="6.5" fontWeight="700" fill="#222" fontFamily="Open Sans">PRE</text>
    </svg>
)
const TaskView = () => (
    <svg width="24" height="24" viewBox="0 0 24 24">
        <rect x="7" y="2" width="16" height="14" rx="2" fill="#f4f4f4" stroke="#bbb" strokeWidth={0.5} />
        <rect x="1" y="8" width="16" height="14" rx="2" fill="#2b2b2b" />
    </svg>
)
const ChatIcon = () => (
    <svg width="26" height="28" viewBox="0 0 26 28">
        <path d="M13 1c7 0 12 5 12 12s-5 12-12 12H5l-3 2 1-5C1 19 1 16 1 13 1 6 6 1 13 1z" fill="#6b61d9" />
        <rect x="7" y="9" width="9" height="8" rx="1.5" fill="#fff" />
        <path d="M17 12l4-2v8l-4-2z" fill="#fff" />
    </svg>
)
const FolderIcon = () => (
    <svg width="26" height="26" viewBox="0 0 26 26">
        <path d="M1 3h9l3 3h12v18H1z" fill="#f5c842" />
        <path d="M1 8h24v16H1z" fill="#fbd96a" />
        <rect x="7" y="17" width="12" height="7" rx="1" fill="#1f6fc4" />
    </svg>
)
const StoreIcon = () => (
    <svg width="24" height="26" viewBox="0 0 24 26">
        <path d="M7 5V3a2 2 0 0 1 2-2h6a2 2 0 0 1 2 2v2" fill="none" stroke="#2aa0e6" strokeWidth={1.5} />
        <rect x="0" y="5" width="24" height="21" rx="2" fill="#123a6b" />
        <path d="M7 10h4.5v4.5H7z" fill="#e8532b" />
        <path d="M12.5 10H17v4.5h-4.5z" fill="#7ab929" />
        <path d="M7 15.5h4.5V20H7z" fill="#2aa0e6" />
        <path d="M12.5 15.5H17V20h-4.5z" fill="#f7ba18" />
    </svg>
)
const MyHp = () => (
    <svg width="24" height="24" viewBox="0 0 24 24">
        <rect width="24" height="24" rx="1" fill="#1b9ad6" />
        <text x="12" y="15" textAnchor="middle" fontSize="8" fontStyle="italic" fill="#fff" fontFamily="Open Sans">my<tspan fontWeight="700" fontSize="10">hp</tspan></text>
    </svg>
)
const McAfee = () => (
    <svg width="22" height="26" viewBox="0 0 24 28">
        <path d="M1 2l5 3 6-3 6 3 5-3v18l-11 7-11-7z" fill="#c8202f" />
        <path d="M7 9l5 2 5-2v9l-5 3-5-3z" fill="#cde5ee" />
    </svg>
)
const Spotify = () => (
    <svg width="24" height="26" viewBox="0 0 24 26">
        <ellipse cx="12" cy="13" rx="12" ry="12.5" fill="#1ed760" />
        <path d="M5 9c5-1.5 10-1 14 1.5M6 13c4-1 9-.7 12 1.5M7 17c3-.8 7-.5 10 1" fill="none" stroke="#111" strokeWidth={2} strokeLinecap="round" />
    </svg>
)
const PowerBiIcon = () => (
    <svg width="24" height="25" viewBox="0 0 24 25">
        <rect x="0" y="0" width="24" height="25" fill="#1f6f78" />
        <rect x="13" y="0" width="9" height="25" fill="#c9a227" />
        <rect x="7" y="7" width="9" height="18" fill="#f0c93a" />
        <rect x="2" y="13" width="7" height="12" fill="#f7e07a" />
    </svg>
)
const CloudIcon = () => (
    <svg width="22" height="20" viewBox="0 0 22 20">
        <path d="M5 16a4 4 0 0 1 0-8 6 6 0 0 1 11-1 4.5 4.5 0 0 1 1 9z" fill="#e8e8e8" stroke="#555" />
        <circle cx="16" cy="14" r="4" fill="#fff" stroke="#2f85d0" />
    </svg>
)
const BatteryIcon = () => (
    <svg width="18" height="16" viewBox="0 0 18 16">
        <rect x="1" y="4" width="14" height="10" rx="1.5" fill="#222" />
        <path d="M15 7h2v4h-2zM4 0l-1 5h4L5 9" fill="#222" stroke="#cde5ee" strokeWidth={0.5} />
    </svg>
)
const BellIcon = () => (
    <svg width="18" height="22" viewBox="0 0 18 22">
        <path d="M2 15V9a5.5 5.5 0 0 1 8-5v4h4v7l2 2H0z" fill="#222" />
        <path d="M6 19h4v1.5H6z" fill="#222" />
        <path d="M11.5 1h4l-4 4h4" fill="none" stroke="#222" strokeWidth={1.1} />
    </svg>
)

/* ---------- data ---------- */
const MENU = ['File', 'Home', 'Insert', 'Modeling', 'View', 'Optimize', 'Help']
const ROWS = [
    ['Engineering', '86'],
    ['Commerce', '69'],
    ['Science', '52'],
    ['Humanities', '39'],
    ['Medicine', '39'],
    ['Others', '22'],
]
const PAGES = [
    { name: 'Page 1', w: 77 },
    { name: 'Page 2', w: 76 },
    { name: 'ch', w: 54, active: true },
    { name: 'dropyr', w: 74 },
    { name: 'firstch', w: 74 },
    { name: 'Instit.', w: 69 },
]

const Btn = ({ w, icon, lines, caret, off }: { w: number; icon: React.ReactNode; lines: string[]; caret?: boolean; off?: boolean }) => (
    <RibbonBtn $w={w} $off={off}>
        <IconSlot>{icon}</IconSlot>
        {lines.map((l, i) => (
            <BtnLine key={l}>
                {l}
                {caret && i === lines.length - 1 && <ChevronDown size={9} strokeWidth={2} />}
            </BtnLine>
        ))}
    </RibbonBtn>
)

export default function App() {
    return (
        <Shell>
            <GlobalStyle />
            <TitleBar>
                <QuickTools>
                    <SaveIcon />
                    <Undo2 size={16} color="#6f6e6c" strokeWidth={1.3} />
                    <Redo2 size={16} color="#6f6e6c" strokeWidth={1.3} />
                </QuickTools>
                <span>Sample1</span>
                <TitleRight>
                    <UserName>SWAATHI V E MS212531</UserName>
                    <Avatar />
                    <Spacer $w={13} />
                    <WinButton><Minus size={13} color="#fff" /></WinButton>
                    <WinButton><RestoreIcon /></WinButton>
                    <WinButton><X size={16} color="#fff" strokeWidth={1.5} /></WinButton>
                </TitleRight>
            </TitleBar>

            <MenuRow>
                {MENU.map(m => <MenuTab key={m} $active={m === 'Home'} $first={m === 'File'}>{m}</MenuTab>)}
                <ShareButton>
                    <ShareIcon />
                    Share
                    <ChevronDown size={13} />
                </ShareButton>
            </MenuRow>

            <Ribbon>
                <Group $w={160} $pad={12}>
                    <GroupBody>
                        <Btn w={34} off icon={<IconPaste />} lines={['Paste']} />
                        <SmallStack>
                            <SmallBtn><Scissors size={16} color="#a9c6dd" strokeWidth={1.2} />Cut</SmallBtn>
                            <SmallBtn><Copy size={15} color="#c8c6c4" strokeWidth={1.2} />Copy</SmallBtn>
                            <SmallBtn><Paintbrush size={15} color="#dcb98a" strokeWidth={1.3} />Format painter</SmallBtn>
                        </SmallStack>
                    </GroupBody>
                    <GroupLabel $shift={12}>Clipboard</GroupLabel>
                </Group>
                <Group $w={344} $pad={7}>
                    <GroupBody>
                        <Btn w={42} icon={<IconGetData />} lines={['Get', 'data']} caret />
                        <Btn w={56} icon={<IconExcel />} lines={['Excel', 'workbook']} />
                        <Btn w={38} icon={<IconHub />} lines={['Data', 'hub']} caret />
                        <Btn w={43} icon={<IconSql />} lines={['SQL', 'Server']} />
                        <Btn w={38} icon={<IconEnter />} lines={['Enter', 'data']} />
                        <Btn w={56} icon={<IconDataverse />} lines={['Dataverse']} />
                        <Btn w={56} icon={<IconRecent />} lines={['Recent', 'sources']} caret />
                    </GroupBody>
                    <GroupLabel $shift={7}>Data</GroupLabel>
                </Group>
                <Group $w={116} $pad={10}>
                    <GroupBody>
                        <Btn w={54} icon={<IconTransform />} lines={['Transform', 'data']} caret />
                        <Btn w={44} icon={<IconRefresh />} lines={['Refresh']} />
                    </GroupBody>
                    <GroupLabel $shift={10}>Queries</GroupLabel>
                </Group>
                <Group $w={147} $pad={8}>
                    <GroupBody>
                        <Btn w={40} icon={<IconNewVisual />} lines={['New', 'visual']} />
                        <Btn w={40} icon={<IconTextBox />} lines={['Text', 'box']} />
                        <Btn w={48} icon={<IconMore />} lines={['More', 'visuals']} caret />
                    </GroupBody>
                    <GroupLabel $shift={8}>Insert</GroupLabel>
                </Group>
                <Group $w={115} $pad={5}>
                    <GroupBody>
                        <Btn w={52} icon={<IconCalc />} lines={['New', 'measure']} />
                        <Btn w={46} icon={<IconCalc bolt />} lines={['Quick', 'measure']} />
                    </GroupBody>
                    <GroupLabel $shift={5}>Calculations</GroupLabel>
                </Group>
                <Group $w={71} $pad={1}>
                    <GroupBody>
                        <RibbonBtn $w={66} $off>
                            <IconSlot><IconSensitivity /></IconSlot>
                            <BtnLine>Sensitivity</BtnLine>
                            <ChevronDown size={10} />
                        </RibbonBtn>
                    </GroupBody>
                    <GroupLabel $shift={1}>Sensitivity</GroupLabel>
                </Group>
                <Group $w={58}>
                    <GroupBody>
                        <Btn w={58} icon={<IconPublish />} lines={['Publish']} />
                    </GroupBody>
                    <GroupLabel>Share</GroupLabel>
                </Group>
                <RibbonCollapse><ChevronUp size={13} strokeWidth={2} /></RibbonCollapse>
            </Ribbon>

            <Main>
                <LeftNav>
                    <NavItem $active><ReportViewIcon /></NavItem>
                    <NavItem><TableViewIcon /></NavItem>
                    <NavItem><ModelViewIcon /></NavItem>
                </LeftNav>

                <Center>
                    <CanvasRow>
                        <Canvas>
                            <ReportPage>
                                <BackCircle><BackIcon /></BackCircle>
                                <TopVisuals>
                                    <DonutVisual>
                                        <DonutTitle>Career counseling</DonutTitle>
                                        <DonutChart />
                                    </DonutVisual>
                                    <StudentsTable>
                                        <HeadRow>
                                            <HeadCell>Field of education</HeadCell>
                                            <HeadCell>No. of Students<SortArrow /></HeadCell>
                                        </HeadRow>
                                        {ROWS.map(([name, n], i) => (
                                            <BodyRow key={name} $alt={i % 2 === 1}>
                                                <BodyCell>{name}</BodyCell>
                                                <BodyCell $right>{n}</BodyCell>
                                            </BodyRow>
                                        ))}
                                        <TotalRow>
                                            <TotalCell>Total</TotalCell>
                                            <TotalCell $right>307</TotalCell>
                                        </TotalRow>
                                    </StudentsTable>
                                </TopVisuals>
                                <SlicerVisual>
                                    <SlicerTitle>Intention of pursuing a career/future in the field</SlicerTitle>
                                    <SlicerCaret><ChevronDown size={8} /></SlicerCaret>
                                    <SlicerRow>
                                        <SlicerItem>Maybe</SlicerItem>
                                        <SlicerItem>No</SlicerItem>
                                        <SlicerItem>Yes</SlicerItem>
                                    </SlicerRow>
                                </SlicerVisual>
                            </ReportPage>
                        </Canvas>
                        <FiltersPane>
                            <ChevronsLeft size={20} strokeWidth={1.2} />
                            <Spacer $h={11} />
                            <FunnelIcon />
                            <FiltersLabel>Filters</FiltersLabel>
                        </FiltersPane>
                    </CanvasRow>
                    <TabsBar>
                        <ViewSwitch>
                            <ViewBtn $w={23} $active><DesktopIcon /></ViewBtn>
                            <ViewBtn $w={67}><PhoneIcon /></ViewBtn>
                            <PageArrows>
                                <ChevronLeft size={9} />
                                <ChevronRight size={9} />
                            </PageArrows>
                        </ViewSwitch>
                        {PAGES.map(p => (
                            <PageTab key={p.name} $w={p.w} $active={p.active}>
                                {p.name}
                                {p.active && <TabClose>x</TabClose>}
                            </PageTab>
                        ))}
                        <AddPage><Plus size={16} strokeWidth={3} /></AddPage>
                    </TabsBar>
                </Center>

                <VizPane>
                    <PaneHead $left={9}>
                        Visualizations
                        <ChevronsRight size={20} strokeWidth={1.2} />
                    </PaneHead>
                    <BuildLabel>Build visual</BuildLabel>
                    <BuildTabs>
                        <BuildTab $active><BuildIcon /></BuildTab>
                        <BuildTab><FormatIcon /></BuildTab>
                    </BuildTabs>
                    <BuildRule />
                    <VizGrid $top={6}>
                        {VIZ_ICONS.map((icon, i) => (
                            <VizCell key={i}>
                                {typeof icon === 'string'
                                    ? <VizText>{icon}</VizText>
                                    : <svg width="20" height="20" viewBox="0 0 20 20">{icon}</svg>}
                            </VizCell>
                        ))}
                    </VizGrid>
                    <ThinRule />
                    <VizGrid $top={2}>
                        <VizCell><GridTiles /></VizCell>
                        <VizCell><RedBlocks /></VizCell>
                    </VizGrid>
                    <ThinRule />
                    <FieldLabel>Values</FieldLabel>
                    <DropBox>Add data fields here</DropBox>
                    <DrillTitle>Drill through</DrillTitle>
                    <ToggleRow>Cross-report<Toggle>On</Toggle></ToggleRow>
                    <ToggleRow>Keep all filters<Toggle>On</Toggle></ToggleRow>
                    <Scrollbar />
                </VizPane>

                <DataPane>
                    <PaneHead $left={8}>
                        Data
                        <ChevronsRight size={20} strokeWidth={1.2} />
                    </PaneHead>
                    <SearchBox><MirroredSearch size={13} strokeWidth={1.3} />Search</SearchBox>
                    <TreeList>
                        {['F1', 'F2', 'F3', 'Sheet1'].map(t => (
                            <TreeRow key={t}>
                                <ChevronRight size={14} strokeWidth={1.2} />
                                <TableIcon />
                                {t}
                            </TreeRow>
                        ))}
                    </TreeList>
                </DataPane>
            </Main>

            <StatusBar>
                Page 3 of 6
                <ZoomTools>
                    <span>-</span>
                    <ZoomTrack />
                    <Plus size={9} strokeWidth={2} />
                    <ZoomValue>62%</ZoomValue>
                    <FitIcon />
                </ZoomTools>
            </StatusBar>

            <Taskbar>
                <Weather>
                    <ThermoWrap>
                        <Thermo />
                        <Badge>1</Badge>
                    </ThermoWrap>
                    <div>
                        <div>Current temp</div>
                        <div>Near record</div>
                    </div>
                </Weather>
                <WinLogo />
                <TaskSearch>
                    <Search size={17} strokeWidth={2} color="#222" />
                    <TaskSearchText>Search</TaskSearchText>
                    <SearchArt />
                </TaskSearch>
                <TaskIcons>
                    <TaskIcon><Copilot /></TaskIcon>
                    <TaskIcon><TaskView /></TaskIcon>
                    <TaskIcon><ChatIcon /></TaskIcon>
                    <TaskIcon $dot><FolderIcon /></TaskIcon>
                    <TaskIcon><StoreIcon /></TaskIcon>
                    <TaskIcon><MyHp /></TaskIcon>
                    <TaskIcon><McAfee /></TaskIcon>
                    <TaskIcon $dot><Spotify /></TaskIcon>
                    <TaskIcon $active><PowerBiIcon /></TaskIcon>
                </TaskIcons>
                <Tray>
                    <ChevronUp size={16} strokeWidth={1.8} />
                    <Spacer $w={10} />
                    <CloudIcon />
                    <LangBlock><div>ENG</div><div>IN</div></LangBlock>
                    <Wifi size={16} />
                    <Spacer $w={6} />
                    <Volume1 size={16} strokeWidth={1.5} />
                    <Spacer $w={8} />
                    <BatteryIcon />
                    <ClockBlock><div>16:12</div><div>30-12-2023</div></ClockBlock>
                    <Spacer $w={16} />
                    <BellIcon />
                </Tray>
            </Taskbar>
        </Shell>
    )
}
